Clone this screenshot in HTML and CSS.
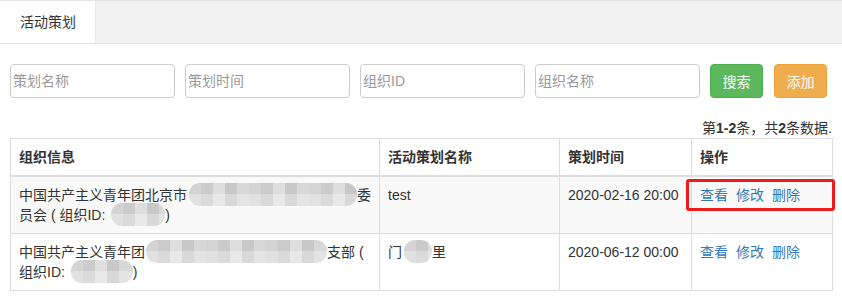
FILE: index.html
```html
<!DOCTYPE html>
<html lang="zh-CN">
<head>
    <meta charset="UTF-8">
    <title>活动策划</title>
    <link rel="stylesheet" href="styles.css">
</head>
<body>
    <div class="tabs">
        <div class="tab active">活动策划</div>
    </div>
    <div class="page">
        <form class="search">
            <input type="text" placeholder="策划名称">
            <input type="text" placeholder="策划时间">
            <input type="text" placeholder="组织ID">
            <input type="text" placeholder="组织名称">
            <button type="button" class="btn btn-success">搜索</button>
            <button type="button" class="btn btn-warning">添加</button>
        </form>
        <div class="summary">第<b>1-2</b>条，共<b>2</b>条数据.</div>
        <table class="grid">
            <colgroup>
                <col class="c-org">
                <col class="c-name">
                <col class="c-time">
                <col class="c-ops">
            </colgroup>
            <thead>
                <tr>
                    <th>组织信息</th>
                    <th>活动策划名称</th>
                    <th>策划时间</th>
                    <th>操作</th>
                </tr>
            </thead>
            <tbody>
                <tr>
                    <td>中国共产主义青年团北京市<span class="mask m1"></span>委<br>员会 ( 组织ID: <span class="mask m2"></span>)</td>
                    <td>test</td>
                    <td>2020-02-16 20:00</td>
                    <td class="ops">
                        <a href="#">查看</a><a href="#">修改</a><a href="#">删除</a>
                        <span class="mark"></span>
                    </td>
                </tr>
                <tr>
                    <td>中国共产主义青年团<span class="mask m3"></span>支部 (<br>组织ID: <span class="mask m4"></span>)</td>
                    <td>门<span class="mask m5"></span>里</td>
                    <td>2020-06-12 00:00</td>
                    <td class="ops">
                        <a href="#">查看</a><a href="#">修改</a><a href="#">删除</a>
                    </td>
                </tr>
            </tbody>
        </table>
    </div>
</body>
</html>
```

FILE: styles.css
```css
* {
    box-sizing: border-box;
}
body {
    margin: 0;
    font-family: "Liberation Sans", "Noto Sans CJK SC", sans-serif;
    font-size: 14px;
    line-height: 20px;
    color: #333;
    background: #fff;
}
.tabs {
    display: flex;
    height: 44px;
    background: #f2f2f2;
    border-top: 1px solid #e6e6e6;
    border-bottom: 1px solid #e6e6e6;
}
.tab {
    width: 96px;
    padding-left: 20px;
    line-height: 42px;
    color: #333;
}
.tab.active {
    background: #fff;
    border-right: 1px solid #e6e6e6;
    border-radius: 2px 2px 0 0;
}
.page {
    padding: 0 10px;
}
.search {
    display: flex;
    gap: 10px;
    margin: 20px 0;
}
.search input {
    width: 165px;
    height: 34px;
    padding: 0 2px;
    border: 1px solid #ccc;
    border-radius: 4px;
    font-family: inherit;
    font-size: 14px;
    color: #555;
    outline: none;
}
.search input::placeholder {
    color: #999;
}
.btn {
    width: 53px;
    height: 34px;
    border: 1px solid transparent;
    border-radius: 4px;
    font-family: inherit;
    font-size: 14px;
    color: #fff;
    cursor: pointer;
}
.btn-success {
    background: #5cb85c;
    border-color: #4cae4c;
}
.btn-warning {
    margin-left: 1px;
    background: #f0ad4e;
    border-color: #eea236;
}
.summary {
    text-align: right;
}
.grid {
    width: 100%;
    table-layout: fixed;
    border-collapse: collapse;
    border: 1px solid #ddd;
}
.c-org { width: 369px; }
.c-name { width: 180px; }
.c-time { width: 132px; }
.c-ops { width: 141px; }
.grid th,
.grid td {
    padding: 8px;
    border: 1px solid #ddd;
    text-align: left;
    vertical-align: top;
}
.grid thead th {
    border-bottom: 2px solid #ddd;
}
.grid tbody tr:nth-child(odd) {
    background: #f9f9f9;
}
.ops {
    position: relative;
}
.ops a {
    margin-right: 8px;
    color: #337ab7;
    text-decoration: none;
}
/* annotation box round the actions */
.mark {
    position: absolute;
    left: -6px;
    top: 2px;
    width: 149px;
    height: 32px;
    border: 3px solid #f01818;
    border-radius: 3px;
}
/* mosaic over hidden text */
.mask {
    display: inline-block;
    height: 23px;
    margin: -2px 0 -1px;
    vertical-align: top;
    border-radius: 11px;
    background:
        linear-gradient(to bottom, rgba(255, 255, 255, 0) 50%, rgba(255, 255, 255, 0.3) 50%),
        repeating-linear-gradient(90deg, #d4d4d4 0 12px, #cbcbcb 12px 24px, #dedede 24px 36px, #c8c8c8 36px 48px, #d8d8d8 48px 60px);
    filter: blur(0.6px);
}
.m1 { width: 168px; margin-left: 2px; }
.m2 { width: 54px; margin-left: 2px; }
.m3 { width: 181px; margin-left: 1px; }
.m4 { width: 62px; margin-left: 2px; }
.m5 { width: 28px; margin-left: 2px; }
```
